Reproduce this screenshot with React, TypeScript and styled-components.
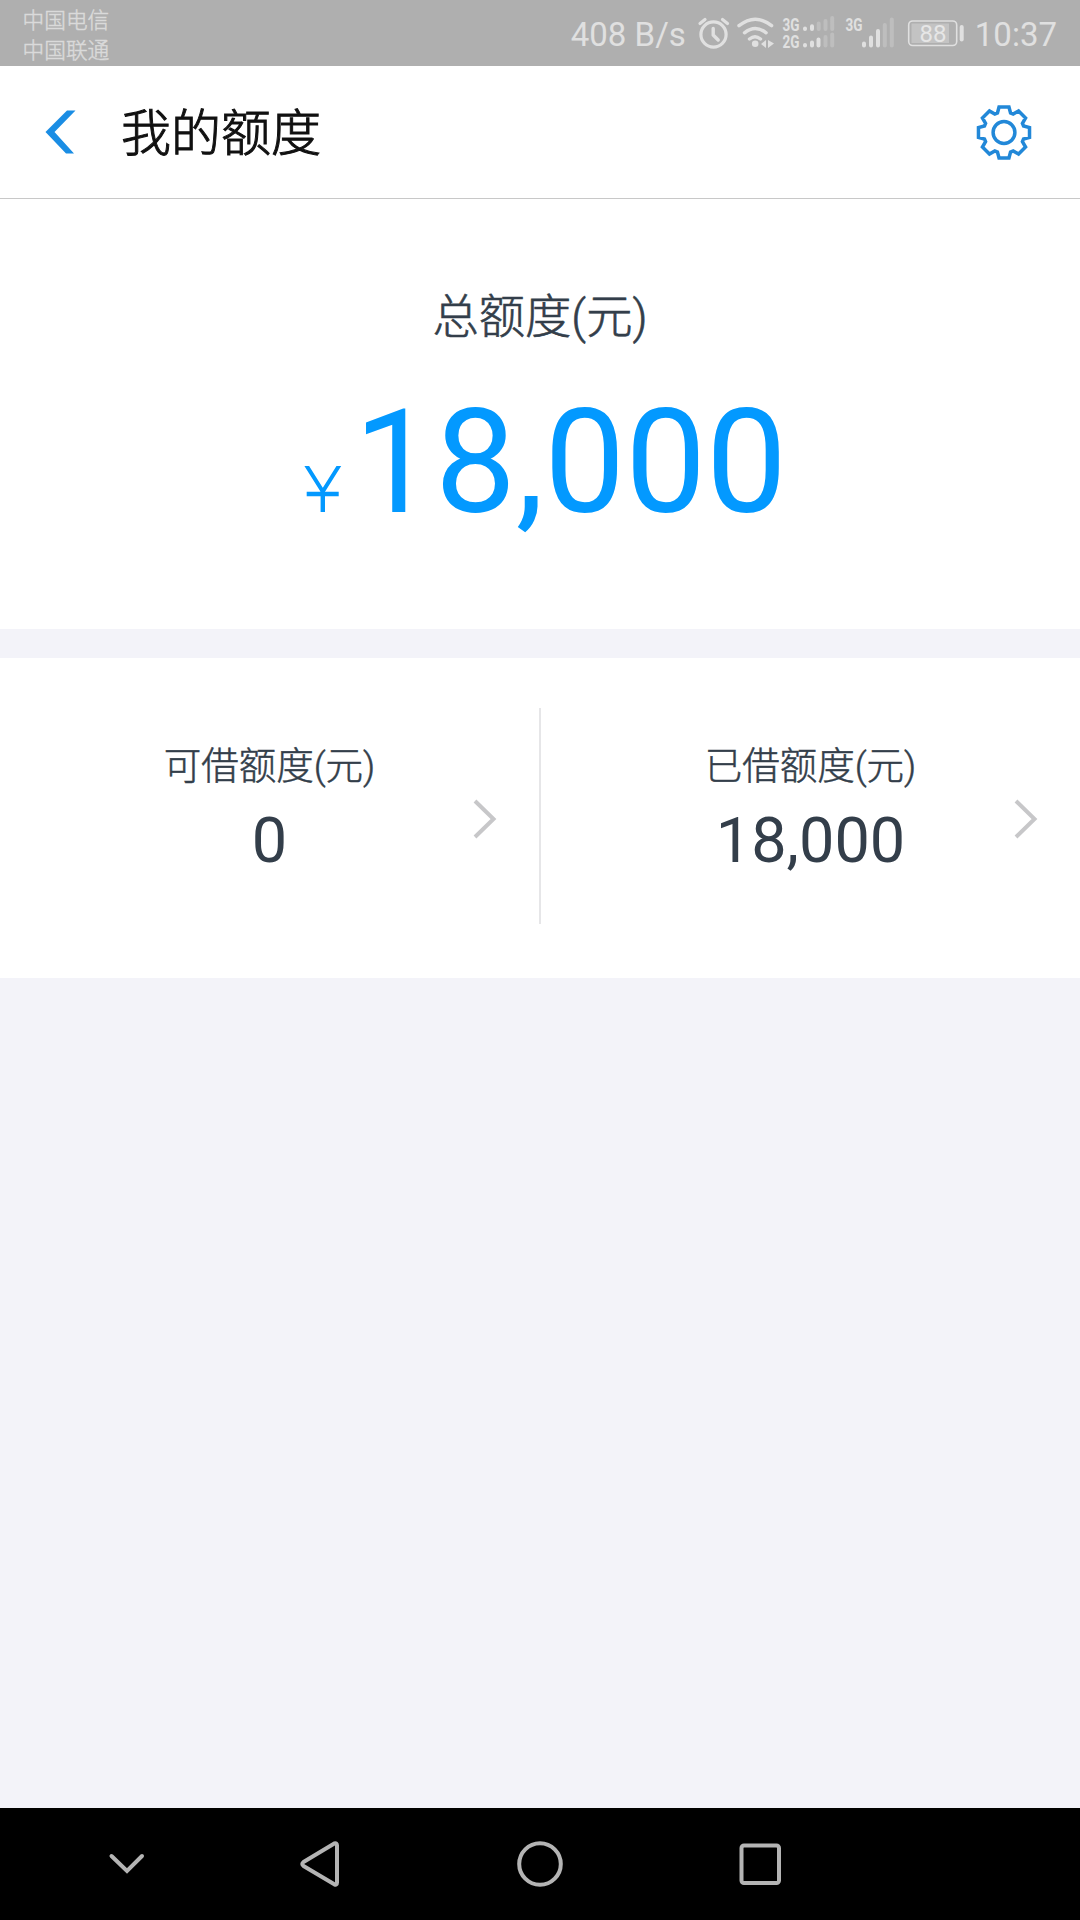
import React from "react";
import styled, { createGlobalStyle } from "styled-components";

const FONT = 'Roboto, "Noto Sans CJK SC", sans-serif';
const ICON = "#e0e0e0";
const DIM = "#bebebe";
const INK = "#333e4a";

const GlobalStyle = createGlobalStyle`
  * { box-sizing: border-box; }
  body { margin: 0; background: #f3f3f9; font-family: ${FONT}; }
  svg { display: block; flex: none; }
`;

const Screen = styled.div`
  width: 1080px;
  height: 1920px;
  display: flex;
  flex-direction: column;
  overflow: hidden;
  background: #f3f3f9;
`;

const StatusBar = styled.header`
  height: 66px;
  flex: none;
  display: flex;
  justify-content: space-between;
  background: #afafaf;
  color: ${ICON};
  padding: 0 23px 0 22.5px;
`;

const Carriers = styled.div`
  padding-top: 5.5px;
  font-size: 21.7px;
  line-height: 30px;
  color: #dadada;
  font-weight: 300;
  -webkit-text-stroke: 0.45px #dadada;
`;

const StatusIcons = styled.div`
  display: flex;
  align-items: flex-start;
  gap: 3px;
`;

const StatusText = styled.span<{ $after?: number }>`
  padding-top: 15px;
  margin-right: ${(p) => p.$after ?? 0}px;
  font-size: 33px;
  line-height: 40px;
  white-space: pre;
`;

const TitleBar = styled.div`
  height: 133px;
  flex: none;
  display: flex;
  align-items: center;
  background: #fff;
  border-bottom: 1px solid #c8c8c8;
  padding: 0 48.5px 0 45px;
`;

const Title = styled.h1`
  flex: 1;
  margin: 0;
  padding: 3px 0 0 45px;
  font-size: 50px;
  line-height: 60px;
  font-weight: 300;
  color: #111;
  -webkit-text-stroke: 1px #111;
`;

const Total = styled.section`
  height: 430px;
  flex: none;
  display: flex;
  flex-direction: column;
  align-items: center;
  background: #fff;
  padding-top: 88px;
`;

const TotalLabel = styled.div`
  font-size: 46.3px;
  line-height: 60px;
  font-weight: 300;
  color: ${INK};
  -webkit-text-stroke: 0.6px ${INK};
`;

const TotalAmount = styled.div`
  display: flex;
  align-items: baseline;
  margin-top: 31px;
  padding-left: 11px;
  color: #0399ff;
  font-size: 144px;
  line-height: 169px;

  svg { margin-bottom: -3px; }
`;

const Split = styled.section`
  height: 320px;
  flex: none;
  display: flex;
  margin-top: 29px;
  padding: 50px 0 54px;
  background: #fff;
`;

const Cell = styled.div<{ $divider?: boolean }>`
  flex: 1;
  display: grid;
  grid-template-columns: 1fr auto 1fr;
  border-right: ${(p) => (p.$divider ? "2px solid #e6e6e8" : "none")};
`;

const CellBody = styled.div`
  grid-column: 2;
  display: flex;
  flex-direction: column;
  align-items: center;
  padding-top: 33px;
  color: ${INK};
`;

const CellLabel = styled.div`
  font-size: 37.5px;
  line-height: 50px;
  font-weight: 300;
  -webkit-text-stroke: 0.5px ${INK};
`;

const CellValue = styled.div`
  font-size: 63px;
  line-height: 74px;
  margin-top: 13px;
`;

const CellArrow = styled.div`
  display: flex;
  justify-content: flex-end;
  padding: 91px 42px 0 0;
`;

const Blank = styled.main`
  flex: 1;
`;

const NavBar = styled.nav`
  height: 112px;
  flex: none;
  display: flex;
  align-items: flex-start;
  background: #000;
  padding: 32px 0 0 107px;
`;

const NavSlot = styled.div<{ $gap?: number }>`
  margin-left: ${(p) => p.$gap ?? 0}px;
`;

/* Each tooth of the gear: base, cap, cap, base as [degrees from its axis, radius] */
const TOOTH: [number, number][] = [
  [-18.5, 20.6],
  [-11, 26],
  [11, 26],
  [18.5, 20.6],
];

const gearPoints = Array.from({ length: 8 }, (_, i) =>
  TOOTH.map(([a, r]) => {
    const t = ((i * 45 + a - 90) * Math.PI) / 180;
    return `${(28 + r * Math.cos(t)).toFixed(2)},${(28.5 + r * Math.sin(t)).toFixed(2)}`;
  }).join(" ")
).join(" ");

/* Alarm, wifi, two signal meters and the battery, in status bar coordinates */
const StatusGlyphs = () => (
  <svg width="278" height="66" viewBox="694 0 278 66" fill="none" stroke={ICON} strokeLinecap="round">
    <circle cx="713.5" cy="34.5" r="12.6" strokeWidth="3.2" />
    <path d="M713.2 28.5v6.500l5 5" strokeWidth="3.400" strokeLinejoin="round" />
    <path d="M700 23.500l5-4M727.500 23.500l-5-4" strokeWidth="3.200" />
    <path d="M739 25.700q16.300-13 32.600 0M744.500 32.800q10.800-8.500 21.600 0M749.500 39q5.500-4.500 11 0" strokeWidth="3.400" />
    <g fill={ICON} stroke="none">
      <circle cx="755.200" cy="43.700" r="3.300" />
      <path d="M761 44l5-4v8zM768 40l6 3.500-6 4.500z" />
      <g fontFamily={FONT} fontWeight="700" fontSize="19">
        <text x="782.500" y="31" textLength="17" lengthAdjust="spacingAndGlyphs">3G</text>
        <text x="782.500" y="47.800" textLength="17" lengthAdjust="spacingAndGlyphs">2G</text>
        <text x="845.500" y="31" textLength="17" lengthAdjust="spacingAndGlyphs">3G</text>
      </g>
    </g>
    <g strokeWidth="4">
      <path d="M805 28.500v.5M812 26.300v2.700M805 44.900v.5M812 42.500v3M818.500 39.500v6" />
      <path d="M818.700 23.500v5.500M825.500 21v8M832.200 18v11M825.500 37v8.500M832.200 34.500v11" stroke={DIM} />
      <path d="M864 43.500v2M871 37.500v8M878 31v14.500" />
      <path d="M884.800 25v20.500M891.800 19.500v26" stroke={DIM} />
    </g>
    <rect x="911.500" y="23.500" width="37.500" height="19.500" fill="#c3c3c3" stroke="none" />
    <rect x="908.700" y="21" width="48" height="24.500" rx="4" strokeWidth="1.600" />
    <path d="M961.700 27v12.500" strokeWidth="4" />
    <text x="933" y="42" textAnchor="middle" fill="#e6e6e6" stroke="none" fontFamily={FONT} fontSize="24">88</text>
  </svg>
);

const Arrow = () => (
  <svg width="24" height="40" viewBox="0 0 24 40" fill="none" stroke="#c7c7c9" strokeWidth="4">
    <path d="M2 2l18.500 18L2 38" />
  </svg>
);

export default function App() {
  return (
    <>
      <GlobalStyle />
      <Screen>
        <StatusBar>
          <Carriers>
            <div>中国电信</div>
            <div>中国联通</div>
          </Carriers>
          <StatusIcons>
            <StatusText $after={5}>408 B/s</StatusText>
            <StatusGlyphs />
            <StatusText>10:37</StatusText>
          </StatusIcons>
        </StatusBar>
        <TitleBar>
          <svg width="31" height="44" viewBox="0 0 31 44" fill="#1a8de4">
            <path d="M22 .5h8.500L9.500 22l19.500 21.500h-8L.5 22z" />
          </svg>
          <Title>我的额度</Title>
          <svg width="56" height="57" viewBox="0 0 56 57" fill="none" stroke="#2288d8" strokeWidth="3.500">
            <polygon points={gearPoints} />
            <circle cx="28" cy="28.500" r="10.900" />
          </svg>
        </TitleBar>
        <Total>
          <TotalLabel>总额度(元)</TotalLabel>
          <TotalAmount>
            <svg width="50" height="46" viewBox="0 0 50 46" fill="none" stroke="#0399ff">
              <path d="M1.500-2L18.800 25.500 36.100-2" strokeWidth="4" />
              <path d="M2.700 28h32M18.800 24v22" strokeWidth="4.400" />
            </svg>
            <span>18,000</span>
          </TotalAmount>
        </Total>
        <Split>
          <Cell $divider>
            <CellBody>
              <CellLabel>可借额度(元)</CellLabel>
              <CellValue>0</CellValue>
            </CellBody>
            <CellArrow><Arrow /></CellArrow>
          </Cell>
          <Cell>
            <CellBody>
              <CellLabel>已借额度(元)</CellLabel>
              <CellValue>18,000</CellValue>
            </CellBody>
            <CellArrow><Arrow /></CellArrow>
          </Cell>
        </Split>
        <Blank />
        <NavBar>
          <NavSlot>
            <svg width="40" height="48" viewBox="0 0 40 48" fill="none" stroke="#b4b4b4" strokeWidth="4" strokeLinecap="round">
              <path d="M4.500 16L20 31 35 16" />
            </svg>
          </NavSlot>
          <NavSlot $gap={151}>
            <svg width="44" height="48" viewBox="0 0 44 48" fill="none" stroke="#b4b4b4" strokeWidth="4" strokeLinejoin="round">
              <path d="M36.300 3.500q2.700-1 2.700 2v37q0 3-2.700 1.800L5.500 26q-2.500-2 0-4z" />
            </svg>
          </NavSlot>
          <NavSlot $gap={173}>
            <svg width="50" height="48" viewBox="0 0 50 48" fill="none" stroke="#b4b4b4" strokeWidth="4">
              <circle cx="25" cy="24" r="20.800" />
            </svg>
          </NavSlot>
          <NavSlot $gap={170}>
            <svg width="50" height="48" viewBox="0 0 50 48" fill="none" stroke="#b4b4b4" strokeWidth="4">
              <rect x="6.500" y="5.500" width="37.500" height="37.500" rx="2.500" />
            </svg>
          </NavSlot>
        </NavBar>
      </Screen>
    </>
  );
}
